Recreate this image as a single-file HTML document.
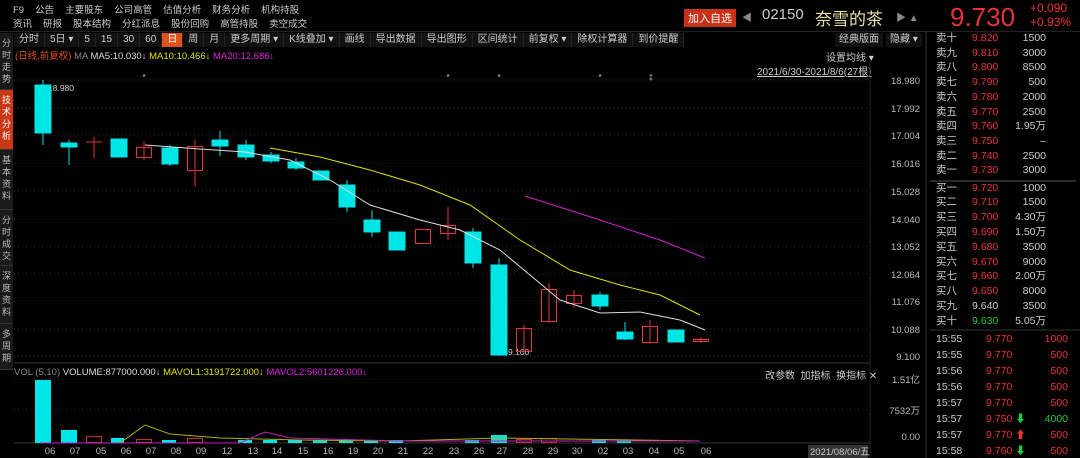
<!DOCTYPE html>
<html><head><meta charset="utf-8"><style>
*{margin:0;padding:0;box-sizing:border-box}
body{width:1080px;height:458px;background:#000;overflow:hidden;font-family:"Liberation Sans","Noto Sans CJK SC",sans-serif;color:#ccc;font-size:10px;position:relative}
.a{position:absolute;white-space:nowrap}
.menu span{margin-right:11px}
.tb{position:absolute;top:33px;left:14px;height:14px;display:flex;font-size:10px}
.tb span{padding:0 5px;line-height:14px;border-right:1px solid #222;background:#111;color:#ccc}
.tb span.on{background:#e0501a;color:#fff}
.side{position:absolute;left:0;width:13px;background:#1a1a1a;color:#bbb;font-size:9px;line-height:12px;text-align:center;border-bottom:1px solid #333;padding-top:4px}
.ob div{position:absolute;left:936px;width:140px;height:13px;font-size:10.5px;line-height:13px}
.ob b{font-weight:normal;position:absolute}
.r{color:#e8323c}.g{color:#1ec83c}.w{color:#ccc}
</style></head><body>
<div class="a menu" style="left:13px;top:2px;font-size:9.5px;color:#ccc"><span>F9</span><span>公告</span><span>主要股东</span><span>公司高管</span><span>估值分析</span><span>财务分析</span><span>机构持股</span></div>
<div class="a menu" style="left:13px;top:16px;font-size:9.5px;color:#ccc"><span>资讯</span><span>研报</span><span>股本结构</span><span>分红派息</span><span>股份回购</span><span>高管持股</span><span>卖空成交</span></div>
<div class="a" style="left:684px;top:9px;background:#c83018;color:#fff;font-size:11px;padding:1px 4px">加入自选</div>
<div class="a" style="left:742px;top:9px;color:#888;font-size:10px">◀</div>
<div class="a" style="left:762px;top:6px;color:#ccc;font-size:15px">02150</div>
<div class="a" style="left:815px;top:5px;color:#e8e0a0;font-size:17px">奈雪的茶</div>
<div class="a" style="left:896px;top:9px;color:#888;font-size:10px">▶ ▲</div>
<div class="a r" style="left:950px;top:2px;font-size:26px">9.730</div>
<div class="a r" style="left:1030px;top:1px;font-size:12px">+0.090</div>
<div class="a r" style="left:1030px;top:15px;font-size:12px">+0.93%</div>
<div style="position:absolute;left:0;top:31px;width:1080px;height:1px;background:#222"></div>
<div class="tb"><span>分时</span><span>5日 ▾</span><span>5</span><span>15</span><span>30</span><span>60</span><span class="on">日</span><span>周</span><span>月</span><span>更多周期 ▾</span><span>K线叠加 ▾</span><span>画线</span><span>导出数据</span><span>导出图形</span><span>区间统计</span><span>前复权 ▾</span><span>除权计算器</span><span>到价提醒</span></div>
<div class="a" style="left:835px;top:33px;background:#111;padding:0 4px;line-height:14px">经典版面</div>
<div class="a" style="left:886px;top:33px;background:#111;padding:0 4px;line-height:14px">隐藏 ▾</div>
<div class="side" style="top:33px;height:57px">分<br>时<br>走<br>势</div>
<div class="side" style="top:90px;height:60px;background:#c8391a;color:#fff">技<br>术<br>分<br>析</div>
<div class="side" style="top:150px;height:60px">基<br>本<br>资<br>料</div>
<div class="side" style="top:210px;height:56px">分<br>时<br>成<br>交</div>
<div class="side" style="top:266px;height:58px">深<br>度<br>资<br>料</div>
<div class="side" style="top:324px;height:46px">多<br>周<br>期</div>
<div class="a" style="left:15px;top:48px;font-size:9.5px"><span style="color:#e0501a">(日线,前复权)</span> <span style="color:#888">MA</span> <span style="color:#ddd">MA5:10.030↓</span> <span style="color:#e0e000">MA10:10.466↓</span> <span style="color:#e020e0">MA20:12.686↓</span></div>
<div class="a" style="left:826px;top:49px;color:#ccc">设置均线 ▾</div>
<div class="a" style="left:757px;top:63px;color:#ccc;text-decoration:underline">2021/6/30-2021/8/6(27根)</div>
<div class="a" style="left:14px;top:367px;font-size:9.5px"><span style="color:#888">VOL (5,10)</span> <span style="color:#ddd">VOLUME:877000.000↓</span> <span style="color:#e0e000">MAVOL1:3191722.000↓</span> <span style="color:#e020e0">MAVOL2:5601226.000↓</span></div>
<div class="a" style="left:765px;top:367px;color:#ccc">改参数 &nbsp;加指标 &nbsp;换指标 ✕</div>
<svg class="a" style="left:0;top:0" width="1080" height="458">
<g stroke="#333" stroke-dasharray="1,3">
<line x1="14" x2="870" y1="80" y2="80"/><line x1="14" x2="870" y1="108" y2="108"/><line x1="14" x2="870" y1="135" y2="135"/><line x1="14" x2="870" y1="163" y2="163"/><line x1="14" x2="870" y1="191" y2="191"/><line x1="14" x2="870" y1="219" y2="219"/><line x1="14" x2="870" y1="246" y2="246"/><line x1="14" x2="870" y1="274" y2="274"/><line x1="14" x2="870" y1="301" y2="301"/><line x1="14" x2="870" y1="329" y2="329"/><line x1="14" x2="870" y1="356" y2="356"/>
<line x1="14" x2="870" y1="379" y2="379"/><line x1="14" x2="870" y1="410" y2="410"/>
</g>
<line x1="14" x2="870" y1="363" y2="363" stroke="#333"/>
<line x1="14" x2="870" y1="443" y2="443" stroke="#333"/>
<line x1="926" x2="926" y1="31" y2="458" stroke="#333"/>
<line x1="870" x2="870" y1="60" y2="458" stroke="#222"/>
<line x1="930" x2="1076" y1="181" y2="181" stroke="#555"/>
<line x1="930" x2="1080" y1="330" y2="330" stroke="#333"/>
<g fill="#bbb" font-size="9.5" text-anchor="end" font-family="Liberation Sans">
<text x="920" y="84">18.980</text><text x="920" y="112">17.992</text><text x="920" y="139">17.004</text><text x="920" y="167">16.016</text><text x="920" y="195">15.028</text><text x="920" y="223">14.040</text><text x="920" y="250">13.052</text><text x="920" y="278">12.064</text><text x="920" y="305">11.076</text><text x="920" y="333">10.088</text><text x="920" y="360">9.100</text>
<text x="920" y="383">1.51亿</text><text x="920" y="414">7532万</text><text x="920" y="440">0.00</text>
</g>
<g fill="#ccc" font-size="8" text-anchor="middle"><text x="144" y="80">*</text><text x="448" y="80">*</text><text x="499" y="80">*</text><text x="600" y="80">*</text><text x="651" y="80">‡</text></g>
<text x="48" y="91" fill="#ccc" font-size="8.5">18.980</text>
<text x="508" y="355" fill="#ccc" font-size="8.5">9.100</text>
<g stroke-width="1">
<g stroke="#00e5e5" fill="#00e5e5">
<line x1="43" x2="43" y1="80" y2="145"/><rect x="35" y="85" width="16" height="48"/>
<line x1="69" x2="69" y1="140" y2="165"/><rect x="61" y="143" width="16" height="4"/>
<rect x="111" y="139" width="16" height="18"/>
<line x1="170" x2="170" y1="145" y2="166"/><rect x="162" y="148" width="16" height="16"/>
<line x1="220" x2="220" y1="131" y2="156"/><rect x="212" y="140" width="16" height="6"/>
<line x1="246" x2="246" y1="140" y2="160"/><rect x="238" y="145" width="16" height="12"/>
<line x1="271" x2="271" y1="152" y2="163"/><rect x="263" y="155" width="16" height="6"/>
<line x1="296" x2="296" y1="158" y2="170"/><rect x="288" y="162" width="16" height="6"/>
<rect x="313" y="171" width="16" height="9"/>
<line x1="347" x2="347" y1="180" y2="212"/><rect x="339" y="185" width="16" height="22"/>
<line x1="372" x2="372" y1="210" y2="237"/><rect x="364" y="220" width="16" height="12"/>
<rect x="389" y="232" width="16" height="18"/>
<line x1="473" x2="473" y1="228" y2="268"/><rect x="465" y="232" width="16" height="31"/>
<line x1="499" x2="499" y1="258" y2="356"/><rect x="491" y="265" width="16" height="90"/>
<line x1="600" x2="600" y1="292" y2="310"/><rect x="592" y="295" width="16" height="11"/>
<line x1="625" x2="625" y1="322" y2="340"/><rect x="617" y="332" width="16" height="7"/>
<rect x="668" y="330" width="16" height="12"/>
</g>
<g stroke="#e8323c" fill="none">
<line x1="94" x2="94" y1="137" y2="158"/><line x1="86" x2="102" y1="142" y2="142"/>
<line x1="144" x2="144" y1="141" y2="160"/><rect x="136.5" y="147.5" width="15" height="10"/>
<line x1="195" x2="195" y1="140" y2="187"/><rect x="187.5" y="146.5" width="15" height="24"/>
<rect x="415.5" y="229.5" width="15" height="14"/>
<line x1="448" x2="448" y1="207" y2="240"/><rect x="440.5" y="225.5" width="15" height="8"/>
<line x1="524" x2="524" y1="325" y2="353"/><rect x="516.5" y="328.5" width="15" height="23"/>
<line x1="549" x2="549" y1="283" y2="323"/><rect x="541.5" y="289.5" width="15" height="32"/>
<line x1="574" x2="574" y1="290" y2="308"/><rect x="566.5" y="295.5" width="15" height="8"/>
<line x1="650" x2="650" y1="320" y2="344"/><rect x="642.5" y="326.5" width="15" height="16"/>
<line x1="701" x2="701" y1="337" y2="343"/><rect x="693.5" y="339.5" width="15" height="2"/>
</g>
</g>
<polyline fill="none" stroke="#ddd" points="145,145 200,149 245,152 290,160 330,180 370,205 420,220 460,230 500,250 530,275 560,300 600,313 640,312 680,320 705,330"/>
<polyline fill="none" stroke="#e0e000" points="270,148 320,157 370,170 420,185 470,205 520,240 570,270 620,285 660,295 700,315"/>
<polyline fill="none" stroke="#d020d0" points="525,196 600,220 660,240 705,258"/>
<g fill="#00e5e5">
<rect x="35" y="380" width="16" height="63"/><rect x="61" y="430" width="16" height="13"/><rect x="111" y="438" width="13" height="5"/><rect x="162" y="440" width="14" height="3"/><rect x="238" y="440" width="14" height="3"/><rect x="263" y="440" width="14" height="3"/><rect x="288" y="440" width="14" height="3"/><rect x="313" y="440" width="14" height="3"/><rect x="339" y="440" width="14" height="3"/><rect x="364" y="440" width="14" height="3"/><rect x="389" y="440" width="14" height="3"/><rect x="465" y="440" width="14" height="3"/><rect x="491" y="435" width="16" height="8"/><rect x="592" y="440" width="14" height="3"/><rect x="617" y="440" width="14" height="3"/>
</g>
<g fill="none" stroke="#c03038"><rect x="86.5" y="436.5" width="15" height="6"/><rect x="136.5" y="439.5" width="15" height="3"/><rect x="187.5" y="438.5" width="15" height="4"/><rect x="516.5" y="439.5" width="15" height="3"/><rect x="541.5" y="438.5" width="15" height="4"/></g>
<polyline fill="none" stroke="#b0b000" points="120,443 145,425 170,434 220,438 300,440 400,441 500,438 700,441"/>
<polyline fill="none" stroke="#c020c0" points="40,443 240,443 265,432 290,438 400,441 700,441"/>
<g fill="#bbb" font-size="9.5" text-anchor="middle">
<text x="50" y="454">06</text><text x="75" y="454">07</text><text x="101" y="454">05</text><text x="126" y="454">06</text><text x="151" y="454">07</text><text x="176" y="454">08</text><text x="201" y="454">09</text><text x="227" y="454">12</text><text x="253" y="454">13</text><text x="277" y="454">14</text><text x="303" y="454">15</text><text x="328" y="454">16</text><text x="353" y="454">19</text><text x="378" y="454">20</text><text x="403" y="454">21</text><text x="428" y="454">22</text><text x="454" y="454">23</text><text x="479" y="454">26</text><text x="502" y="454">27</text><text x="528" y="454">28</text><text x="553" y="454">29</text><text x="577" y="454">30</text><text x="603" y="454">02</text><text x="628" y="454">03</text><text x="654" y="454">04</text><text x="679" y="454">05</text><text x="706" y="454">06</text>
</g>
<rect x="808" y="445" width="60" height="13" fill="#333"/>
<text x="810" y="455" fill="#ccc" font-size="9.5">2021/08/06/五</text>
</svg>
<div class="ob">
<div style="top:32px"><b class="w">卖十</b><b class="r" style="left:36px">9.820</b><b class="w" style="right:30px">1500</b></div>
<div style="top:46.7px"><b class="w">卖九</b><b class="r" style="left:36px">9.810</b><b class="w" style="right:30px">3000</b></div>
<div style="top:61.4px"><b class="w">卖八</b><b class="r" style="left:36px">9.800</b><b class="w" style="right:30px">8500</b></div>
<div style="top:76.1px"><b class="w">卖七</b><b class="r" style="left:36px">9.790</b><b class="w" style="right:30px">500</b></div>
<div style="top:90.8px"><b class="w">卖六</b><b class="r" style="left:36px">9.780</b><b class="w" style="right:30px">2000</b></div>
<div style="top:105.5px"><b class="w">卖五</b><b class="r" style="left:36px">9.770</b><b class="w" style="right:30px">2500</b></div>
<div style="top:120.2px"><b class="w">卖四</b><b class="r" style="left:36px">9.760</b><b class="w" style="right:30px">1.95万</b></div>
<div style="top:134.9px"><b class="w">卖三</b><b class="r" style="left:36px">9.750</b><b class="w" style="right:30px">–</b></div>
<div style="top:149.6px"><b class="w">卖二</b><b class="r" style="left:36px">9.740</b><b class="w" style="right:30px">2500</b></div>
<div style="top:164.3px"><b class="w">卖一</b><b class="r" style="left:36px">9.730</b><b class="w" style="right:30px">3000</b></div>
<div style="top:181.5px"><b class="w">买一</b><b class="r" style="left:36px">9.720</b><b class="w" style="right:30px">1000</b></div>
<div style="top:196.3px"><b class="w">买二</b><b class="r" style="left:36px">9.710</b><b class="w" style="right:30px">1500</b></div>
<div style="top:211.1px"><b class="w">买三</b><b class="r" style="left:36px">9.700</b><b class="w" style="right:30px">4.30万</b></div>
<div style="top:225.9px"><b class="w">买四</b><b class="r" style="left:36px">9.690</b><b class="w" style="right:30px">1.50万</b></div>
<div style="top:240.7px"><b class="w">买五</b><b class="r" style="left:36px">9.680</b><b class="w" style="right:30px">3500</b></div>
<div style="top:255.5px"><b class="w">买六</b><b class="r" style="left:36px">9.670</b><b class="w" style="right:30px">9000</b></div>
<div style="top:270.3px"><b class="w">买七</b><b class="r" style="left:36px">9.660</b><b class="w" style="right:30px">2.00万</b></div>
<div style="top:285.1px"><b class="w">买八</b><b class="r" style="left:36px">9.650</b><b class="w" style="right:30px">8000</b></div>
<div style="top:299.9px"><b class="w">买九</b><b class="w" style="left:36px">9.640</b><b class="w" style="right:30px">3500</b></div>
<div style="top:314.7px"><b class="w">买十</b><b class="g" style="left:36px">9.630</b><b class="w" style="right:30px">5.05万</b></div>
</div>
<div class="ob">
<div style="top:333px"><b class="w">15:55</b><b class="r" style="left:50px">9.770</b><b class="r" style="right:8px">1000</b></div>
<div style="top:349px"><b class="w">15:55</b><b class="r" style="left:50px">9.770</b><b class="r" style="right:8px">500</b></div>
<div style="top:365px"><b class="w">15:56</b><b class="r" style="left:50px">9.770</b><b class="r" style="right:8px">500</b></div>
<div style="top:381px"><b class="w">15:56</b><b class="r" style="left:50px">9.770</b><b class="r" style="right:8px">500</b></div>
<div style="top:397px"><b class="w">15:57</b><b class="r" style="left:50px">9.770</b><b class="r" style="right:8px">500</b></div>
<div style="top:413px"><b class="w">15:57</b><b class="r" style="left:50px">9.750 <span class="g">⬇</span></b><b class="g" style="right:8px">4000</b></div>
<div style="top:429px"><b class="w">15:57</b><b class="r" style="left:50px">9.770 ⬆</b><b class="r" style="right:8px">500</b></div>
<div style="top:445px"><b class="w">15:58</b><b class="r" style="left:50px">9.760 <span class="g">⬇</span></b><b class="r" style="right:8px">500</b></div>
</div>
</body></html>
